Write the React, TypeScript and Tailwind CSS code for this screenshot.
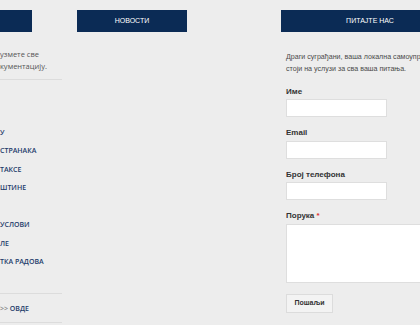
const links = ['У', 'СТРАНАКА', 'ТАКСЕ', 'ШТИНЕ', '', 'УСЛОВИ', 'ЛЕ', 'ТКА РАДОВА']

const Field = ({ label }: { label: string }) => (
  <div className="mb-[10px]">
    <label className="block text-[8px] leading-[12px] font-bold text-[#333] mb-[1.5px]">{label}</label>
    <input className="block w-[101px] h-[18px] bg-white border border-[#dedede] outline-none" />
  </div>
)

export default function App() {
  return (
    <div className="w-[420px] h-[325px] overflow-hidden bg-[#ededed] flex items-start">
      {/* left column, only its right edge is in view */}
      <div className="shrink-0 w-[62px] font-['Open_Sans',sans-serif]">
        <div className="w-[32px] h-[22px] mt-[10px] bg-[#0b2b55]" />
        <p className="mt-[16px] pb-[7px] text-[7.5px] leading-[12px] text-[#555] whitespace-nowrap border-b border-[#dcdcdc]">
          узмете све
          <br />
          кументацију.
        </p>
        <ul className="mt-[43.5px]">
          {links.map((l, i) => (
            <li key={i} className="h-[18.5px] flex items-center text-[7px] font-semibold text-[#1d3b6a] whitespace-nowrap">
              {l}
            </li>
          ))}
        </ul>
        <div className="mt-[21px] pt-[9px] pb-[7px] border-y border-[#dcdcdc] text-[7px] leading-[12px] font-semibold whitespace-nowrap">
          <span className="text-[#888]">&gt;&gt; </span>
          <span className="text-[#1d3b6a]">ОВДЕ</span>
        </div>
      </div>

      {/* news */}
      <div className="shrink-0 w-[110px] ml-[15px]">
        <div className="h-[22px] mt-[10px] bg-[#0b2b55] flex items-center justify-center text-white text-[7px] font-['Liberation_Sans',sans-serif]">
          НОВОСТИ
        </div>
      </div>

      {/* contact */}
      <div className="shrink-0 w-[178px] ml-[94px] font-['Liberation_Sans',sans-serif]">
        <div className="h-[22px] mt-[10px] bg-[#0b2b55] flex items-center justify-center text-white text-[7px]">
          ПИТАЈТЕ НАС
        </div>
        <div className="pl-[5px]">
          <p className="mt-[19px] text-[7.1px] leading-[12px] text-[#4a4a4a] whitespace-nowrap">
            Драги суграђани, ваша локална самоупр
            <br />
            стоји на услузи за сва ваша питања.
          </p>
          <div className="mt-[10.5px]">
            <Field label="Име" />
            <Field label="Email" />
            <Field label="Број телефона" />
            <label className="block text-[8px] leading-[12px] font-bold text-[#333] mb-[1.5px]">
              Порука <span className="text-[#e03030]">*</span>
            </label>
            <textarea className="block w-[170px] h-[59px] bg-white border border-[#dedede] outline-none resize-none" />
            <button className="mt-[11px] w-[47px] h-[19px] bg-[#f3f3f3] border border-[#dcdcdc] text-[7px] font-bold text-[#333]">
              Пошаљи
            </button>
          </div>
        </div>
      </div>
    </div>
  )
}
